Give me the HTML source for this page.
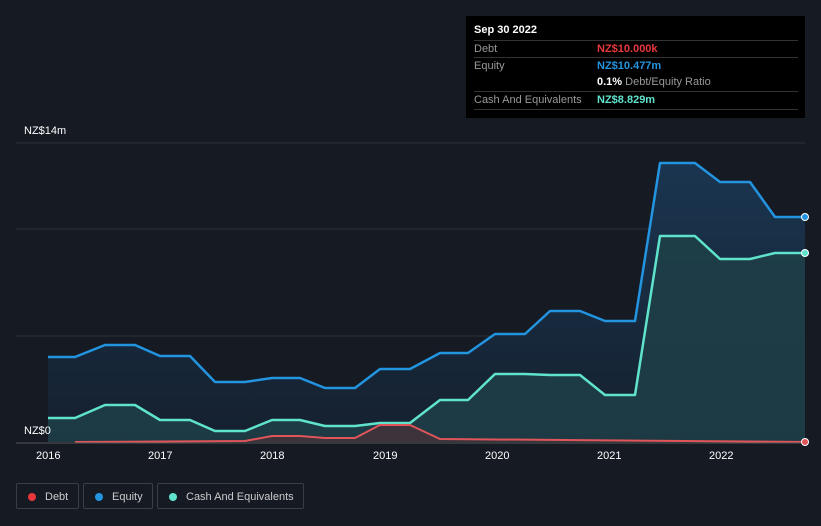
<!DOCTYPE html><html><head><style>
body{margin:0;width:821px;height:526px;background:#151a23;font-family:"Liberation Sans",sans-serif;position:relative;overflow:hidden}
.t{position:absolute;color:#fff;font-size:11px}
.tip{position:absolute;left:466px;top:16px;width:339px;height:102px;background:#000;font-size:11px}
.row{position:absolute;left:8px;width:324px;border-top:1px solid #333;height:17px;line-height:17px;color:#999}
.row span{position:absolute;left:123px;font-weight:bold}
.leg{position:absolute;top:483px;height:26px;border:1px solid #3a3f47;border-radius:2px;color:#ccc;font-size:11px;line-height:26px;box-sizing:border-box}
.leg i{position:absolute;left:11px;top:9px;width:8px;height:8px;border-radius:50%}
</style></head><body>
<svg width="821" height="526" style="position:absolute;left:0;top:0">
<defs><linearGradient id="g" x1="0" y1="0" x2="0" y2="1"><stop offset="0" stop-color="#1a3550"/><stop offset="1" stop-color="#15202e"/></linearGradient></defs>
<line x1="16" y1="143" x2="805" y2="143" stroke="#2a303a"/>
<line x1="16" y1="229" x2="805" y2="229" stroke="#2a303a"/>
<line x1="16" y1="336" x2="805" y2="336" stroke="#2a303a"/>
<polygon fill="url(#g)" points="48,442 48,357 75,357 105,345 135,345 160,356 190,356 215,382 245,382 272,378 300,378 325,388 355,388 380,369 410,369 440,353 468,353 495,334 525,334 550,311 580,311 605,321 635,321 660,163 695,163 720,182 750,182 775,217 805,217 805,442"/>
<polygon fill="#1f4048" opacity="0.85" points="48,442 48,418 75,418 105,405 135,405 160,420 190,420 215,431 245,431 272,420 300,420 325,426 355,426 380,423 410,423 440,400 468,400 495,374 525,374 550,375 580,375 605,395 635,395 660,236 695,236 720,259 750,259 775,253 805,253 805,442"/>
<polyline fill="none" stroke="#2394df" stroke-width="2.5" stroke-linejoin="round" points="48,357 75,357 105,345 135,345 160,356 190,356 215,382 245,382 272,378 300,378 325,388 355,388 380,369 410,369 440,353 468,353 495,334 525,334 550,311 580,311 605,321 635,321 660,163 695,163 720,182 750,182 775,217 805,217"/>
<polyline fill="none" stroke="#5fe3cc" stroke-width="2.5" stroke-linejoin="round" points="48,418 75,418 105,405 135,405 160,420 190,420 215,431 245,431 272,420 300,420 325,426 355,426 380,423 410,423 440,400 468,400 495,374 525,374 550,375 580,375 605,395 635,395 660,236 695,236 720,259 750,259 775,253 805,253"/>
<polygon fill="#4a3038" opacity="0.7" points="75,442 245,441 272,436 300,436 325,438 355,438 380,425 410,425 440,439 805,442"/>
<polyline fill="none" stroke="#e0555a" stroke-width="2" stroke-linejoin="round" points="75,442 245,441 272,436 300,436 325,438 355,438 380,425 410,425 440,439 805,442"/>
<line x1="16" y1="443" x2="805" y2="443" stroke="#555"/>
<circle cx="805" cy="217" r="3.5" fill="#2394df" stroke="#fff"/>
<circle cx="805" cy="253" r="3.5" fill="#5fe3cc" stroke="#fff"/>
<circle cx="805" cy="442" r="3.5" fill="#e0555a" stroke="#fff"/>
</svg>
<div class="t" style="left:24px;top:125px">NZ$14m</div>
<div class="t" style="left:24px;top:425px">NZ$0</div>
<div class="t" style="left:36px;top:450px">2016</div>
<div class="t" style="left:148px;top:450px">2017</div>
<div class="t" style="left:260px;top:450px">2018</div>
<div class="t" style="left:373px;top:450px">2019</div>
<div class="t" style="left:485px;top:450px">2020</div>
<div class="t" style="left:597px;top:450px">2021</div>
<div class="t" style="left:709px;top:450px">2022</div>
<div class="tip">
<div style="position:absolute;left:8px;top:8px;color:#fff;font-weight:bold">Sep 30 2022</div>
<div class="row" style="top:24px">Debt<span style="color:#e8383b">NZ$10.000k</span></div>
<div class="row" style="top:41px">Equity<span style="color:#2394df">NZ$10.477m</span></div>
<div class="row" style="top:58px;border-top:none"><span style="color:#fff">0.1% <b style="color:#999;font-weight:normal">Debt/Equity Ratio</b></span></div>
<div class="row" style="top:75px">Cash And Equivalents<span style="color:#5fe3cc">NZ$8.829m</span></div>
<div class="row" style="top:93px;height:0"></div>
</div>
<div class="leg" style="left:16px;width:63px;padding-left:28px"><i style="background:#e8383b"></i>Debt</div>
<div class="leg" style="left:83px;width:70px;padding-left:28px"><i style="background:#2394df"></i>Equity</div>
<div class="leg" style="left:157px;width:147px;padding-left:28px"><i style="background:#5fe3cc"></i>Cash And Equivalents</div>
</body></html>
